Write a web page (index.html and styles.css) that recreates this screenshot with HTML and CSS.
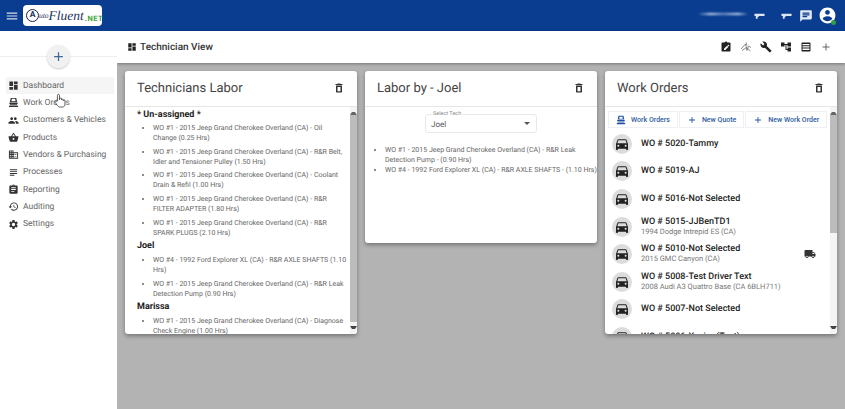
FILE: index.html
```html
<!DOCTYPE html>
<html lang="en">
<head>
    <meta charset="UTF-8">
    <meta name="viewport" content="width=device-width, initial-scale=1.0">
    <title>AutoFluent - Technician View</title>
    <link rel="stylesheet" href="styles.css">
</head>
<body>
    <svg class="icon-defs" aria-hidden="true">
        <symbol id="i-menu" viewBox="0 0 24 24"><path d="M3 18h18v-2H3v2zm0-5h18v-2H3v2zm0-7v2h18V6H3z"/></symbol>
        <symbol id="i-dashboard" viewBox="0 0 24 24"><path d="M3 13h8V3H3v10zm0 8h8v-6H3v6zm10 0h8V11h-8v10zm0-18v6h8V3h-8z"/></symbol>
        <symbol id="i-garage" viewBox="0 0 24 24"><path d="M6 2h12l2 9H4zm2.500 2-1 5h9l-1-5z" fill-rule="evenodd"/><path d="M3 12h18v3H3zM4 16h16v2H4zM2 19h20v3H2z"/></symbol>
        <symbol id="i-people" viewBox="0 0 24 24"><path d="M16 11c1.66 0 2.99-1.34 2.99-3S17.66 5 16 5c-1.66 0-3 1.34-3 3s1.34 3 3 3zm-8 0c1.66 0 2.99-1.34 2.99-3S9.66 5 8 5C6.34 5 5 6.34 5 8s1.34 3 3 3zm0 2c-2.33 0-7 1.17-7 3.5V19h14v-2.5c0-2.33-4.67-3.5-7-3.5zm8 0c-.29 0-.62.02-.97.05 1.16.84 1.97 1.97 1.97 3.45V19h6v-2.5c0-2.33-4.67-3.5-7-3.5z"/></symbol>
        <symbol id="i-basket" viewBox="0 0 24 24"><path d="M17.21 9l-4.38-6.56c-.19-.28-.51-.42-.83-.42-.32 0-.64.14-.83.43L6.79 9H2c-.55 0-1 .45-1 1 0 .09.01.18.04.27l2.54 9.27c.23.84 1 1.46 1.92 1.46h13c.92 0 1.69-.62 1.93-1.46l2.54-9.27L23 10c0-.55-.45-1-1-1h-4.79zM9 9l3-4.4L15 9H9zm3 8c-1.1 0-2-.9-2-2s.9-2 2-2 2 .9 2 2-.9 2-2 2z"/></symbol>
        <symbol id="i-business" viewBox="0 0 24 24"><path d="M12 7V3H2v18h20V7H12zM6 19H4v-2h2v2zm0-4H4v-2h2v2zm0-4H4V9h2v2zm0-4H4V5h2v2zm4 12H8v-2h2v2zm0-4H8v-2h2v2zm0-4H8V9h2v2zm0-4H8V5h2v2zm10 12h-8v-2h2v-2h-2v-2h2v-2h-2V9h8v10zm-2-8h-2v2h2v-2zm0 4h-2v2h2v-2z"/></symbol>
        <symbol id="i-subject" viewBox="0 0 24 24"><path d="M14 17H4v2h10v-2zm6-8H4v2h16V9zM4 15h16v-2H4v2zM4 5v2h16V5H4z"/></symbol>
        <symbol id="i-assignment" viewBox="0 0 24 24"><path d="M19 3h-4.18C14.4 1.84 13.3 1 12 1c-1.3 0-2.4.84-2.82 2H5c-1.1 0-2 .9-2 2v14c0 1.1.9 2 2 2h14c1.1 0 2-.9 2-2V5c0-1.1-.9-2-2-2zm-7 0c.55 0 1 .45 1 1s-.45 1-1 1-1-.45-1-1 .45-1 1-1zm2 14H7v-2h7v2zm3-4H7v-2h10v2zm0-4H7V7h10v2z"/></symbol>
        <symbol id="i-history" viewBox="0 0 24 24"><path d="M13 3c-4.97 0-9 4.03-9 9H1l3.89 3.89.07.14L9 12H6c0-3.87 3.13-7 7-7s7 3.13 7 7-3.13 7-7 7c-1.93 0-3.68-.79-4.94-2.06l-1.42 1.42C8.27 19.99 10.51 21 13 21c4.97 0 9-4.03 9-9s-4.03-9-9-9zm-1 5v5l4.28 2.54.72-1.21-3.5-2.08V8H12z"/></symbol>
        <symbol id="i-settings" viewBox="0 0 24 24"><path d="M19.14 12.94c.04-.3.06-.61.06-.94 0-.32-.02-.64-.07-.94l2.03-1.58c.18-.14.23-.41.12-.61l-1.92-3.32c-.12-.22-.37-.29-.59-.22l-2.39.96c-.5-.38-1.03-.7-1.62-.94l-.36-2.54c-.04-.24-.24-.41-.48-.41h-3.84c-.24 0-.43.17-.47.41l-.36 2.54c-.59.24-1.13.57-1.62.94l-2.39-.96c-.22-.08-.47 0-.59.22L2.74 8.87c-.12.21-.08.47.12.61l2.03 1.58c-.05.3-.09.63-.09.94s.02.64.07.94l-2.03 1.58c-.18.14-.23.41-.12.61l1.92 3.32c.12.22.37.29.59.22l2.39-.96c.5.38 1.03.7 1.62.94l.36 2.54c.05.24.24.41.48.41h3.84c.24 0 .44-.17.47-.41l.36-2.54c.59-.24 1.13-.56 1.62-.94l2.39.96c.22.08.47 0 .59-.22l1.92-3.32c.12-.22.07-.47-.12-.61l-2.01-1.58zM12 15.6c-1.98 0-3.6-1.62-3.6-3.6s1.62-3.6 3.6-3.6 3.6 1.62 3.6 3.6-1.62 3.6-3.6 3.6z"/></symbol>
        <symbol id="i-delete" viewBox="0 0 24 24"><path d="M6 19c0 1.1.9 2 2 2h8c1.1 0 2-.9 2-2V7H6v12zM9 10h6v8.500H9zM15.500 4l-1-1h-5l-1 1H5v2h14V4z" fill-rule="evenodd"/></symbol>
        <symbol id="i-car" viewBox="0 0 24 24"><path d="M18.92 6.01C18.72 5.42 18.16 5 17.5 5h-11c-.66 0-1.21.42-1.42 1.01L3 12v8c0 .55.45 1 1 1h1c.55 0 1-.45 1-1v-1h12v1c0 .55.45 1 1 1h1c.55 0 1-.45 1-1v-8l-2.08-5.99zM6.5 16c-.83 0-1.5-.67-1.5-1.5S5.67 13 6.5 13s1.5.67 1.5 1.5S7.33 16 6.5 16zm11 0c-.83 0-1.5-.67-1.5-1.5s.67-1.5 1.5-1.5 1.5.67 1.5 1.5-.67 1.5-1.5 1.5zM5 11l1.5-4.5h11L19 11H5z"/></symbol>
        <symbol id="i-truck" viewBox="0 0 24 24"><path d="M20 8h-3V4H3c-1.1 0-2 .9-2 2v11h2c0 1.66 1.34 3 3 3s3-1.34 3-3h6c0 1.66 1.34 3 3 3s3-1.34 3-3h2v-5l-3-4zM6 18.5c-.83 0-1.5-.67-1.5-1.5s.67-1.5 1.5-1.5 1.5.67 1.5 1.5-.67 1.5-1.5 1.5zm13.5-9l1.96 2.5H17V9.5h2.5zm-1.5 9c-.83 0-1.5-.67-1.5-1.5s.67-1.5 1.5-1.5 1.5.67 1.5 1.5-.67 1.5-1.5 1.5z"/></symbol>
        <symbol id="i-add" viewBox="0 0 24 24"><path d="M19 13h-6v6h-2v-6H5v-2h6V5h2v6h6v2z"/></symbol>
        <symbol id="i-wrench" viewBox="0 0 24 24"><path d="M22.7 19l-9.1-9.1c.9-2.3.4-5-1.5-6.9-2-2-5-2.4-7.4-1.3L9 6 6 9 1.6 4.7C.4 7.1.9 10.1 2.9 12.1c1.9 1.9 4.6 2.4 6.9 1.5l9.1 9.1c.4.4 1 .4 1.4 0l2.3-2.3c.5-.4.5-1.1.1-1.4z"/></symbol>
        <symbol id="i-tree" viewBox="0 0 24 24"><path d="M22 11V3h-7v3H9V3H2v8h7V8h2v10h4v3h7v-8h-7v3h-2V8h2v3z"/></symbol>
        <symbol id="i-table" viewBox="0 0 24 24"><path d="M5 3h14c1.100 0 2 .9 2 2v14c0 1.100-.9 2-2 2H5c-1.100 0-2-.9-2-2V5c0-1.100.9-2 2-2zm0 3v2.500h14V6zm0 4.500V13h14v-2.500zm0 4.500v3h14v-3z" fill-rule="evenodd"/></symbol>
        <symbol id="i-note" viewBox="0 0 24 24"><path d="M19 3h-4.180C14.400 1.840 13.300 1 12 1c-1.300 0-2.400.84-2.820 2H5c-1.100 0-2 .9-2 2v14c0 1.100.9 2 2 2h14c1.100 0 2-.9 2-2V5c0-1.100-.9-2-2-2zM8 18v-2.500l6-6 2.500 2.500-6 6zm9.300-6.800-2.500-2.500 1-1c.3-.3.700-.3 1 0l1.500 1.500c.3.3.3.700 0 1z" fill-rule="evenodd"/></symbol>
        <symbol id="i-scatter" viewBox="0 0 24 24"><path d="M2 16 11 6l3 13 3-9 5 3M4 19l9-6 8 7M12 3l2 6" fill="none" stroke="currentColor" stroke-width="1.500"/></symbol>
        <symbol id="i-flag" viewBox="0 0 24 24"><path d="M1 8h22v5H10v2H8v4H4v-6H1z"/></symbol>
        <symbol id="i-chat" viewBox="0 0 24 24"><path d="M20 2H4c-1.100 0-1.990.9-1.990 2L2 22l4-4h14c1.100 0 2-.9 2-2V4c0-1.100-.9-2-2-2zM6 6h12v2H6zm0 3h12v2H6zm0 3h8v2H6z" fill-rule="evenodd"/></symbol>
        <symbol id="i-account" viewBox="0 0 24 24"><path d="M12 2C6.480 2 2 6.480 2 12s4.480 10 10 10 10-4.480 10-10S17.520 2 12 2zm0 3c1.660 0 3 1.340 3 3s-1.340 3-3 3-3-1.340-3-3 1.340-3 3-3zm0 14.200c-2.500 0-4.710-1.280-6-3.220.03-1.990 4-3.080 6-3.080 1.990 0 5.970 1.090 6 3.080-1.290 1.940-3.500 3.220-6 3.220z"/></symbol>
    </svg>

    <header class="topbar">
        <svg class="icon menu-icon"><use href="#i-menu"/></svg>
        <div class="logo">
            <span class="logo-mark">A</span><span class="logo-uto">uto</span><span class="logo-fluent">Fluent</span><span class="logo-net">.NET</span>
        </div>
        <div class="topbar-right">
            <div class="smudge"></div>
            <svg class="icon flag-icon"><use href="#i-flag"/></svg>
            <svg class="icon flag-icon flag-second"><use href="#i-flag"/></svg>
            <svg class="icon chat-icon"><use href="#i-chat"/></svg>
            <div class="avatar">
                <svg class="icon avatar-icon"><use href="#i-account"/></svg>
                <span class="online-dot"></span>
            </div>
        </div>
    </header>

    <div class="layout">
        <aside class="sidebar">
            <div class="add-row">
                <button class="add-btn"><svg class="icon"><use href="#i-add"/></svg></button>
            </div>
            <nav class="nav">
                <a class="nav-item active"><svg class="icon"><use href="#i-dashboard"/></svg>Dashboard</a>
                <a class="nav-item"><svg class="icon"><use href="#i-garage"/></svg>Work Orders</a>
                <a class="nav-item"><svg class="icon"><use href="#i-people"/></svg>Customers &amp; Vehicles</a>
                <a class="nav-item"><svg class="icon"><use href="#i-basket"/></svg>Products</a>
                <a class="nav-item"><svg class="icon"><use href="#i-business"/></svg>Vendors &amp; Purchasing</a>
                <a class="nav-item"><svg class="icon"><use href="#i-subject"/></svg>Processes</a>
                <a class="nav-item"><svg class="icon"><use href="#i-assignment"/></svg>Reporting</a>
                <a class="nav-item"><svg class="icon"><use href="#i-history"/></svg>Auditing</a>
                <a class="nav-item"><svg class="icon"><use href="#i-settings"/></svg>Settings</a>
            </nav>
            <svg class="hand-cursor" viewBox="0 0 14 18">
                <path d="M4 9V2.500a1.200 1.200 0 0 1 2.400 0V7.500l.3-1.300a1.100 1.100 0 0 1 2.100.3v1.200a1 1 0 0 1 2 .1v.8a1 1 0 0 1 2 .2v3.700c0 2-1 3.500-2.500 3.500H6.500c-1 0-1.700-.6-2.300-1.500L1.300 10.500c-.6-1 .6-2 1.500-1.100z" fill="#fff" stroke="#333" stroke-width=".9"/>
            </svg>
        </aside>

        <main class="main">
            <div class="toolbar">
                <svg class="icon view-icon"><use href="#i-dashboard"/></svg>
                <span class="view-title">Technician View</span>
                <div class="toolbar-actions">
                    <svg class="icon"><use href="#i-note"/></svg>
                    <svg class="icon thin"><use href="#i-scatter"/></svg>
                    <svg class="icon"><use href="#i-wrench"/></svg>
                    <svg class="icon"><use href="#i-tree"/></svg>
                    <svg class="icon"><use href="#i-table"/></svg>
                    <svg class="icon thin"><use href="#i-add"/></svg>
                </div>
            </div>

            <div class="cards">
                <section class="card">
                    <div class="card-head">
                        <h2>Technicians Labor</h2>
                        <svg class="icon"><use href="#i-delete"/></svg>
                    </div>
                    <div class="card-scroll">
                        <div class="card-body labor">
                            <h4>* Un-assigned *</h4>
                            <ul>
                                <li>WO #1 - 2015 Jeep Grand Cherokee Overland (CA) - Oil Change (0.25 Hrs)</li>
                                <li>WO #1 - 2015 Jeep Grand Cherokee Overland (CA) - R&amp;R Belt, Idler and Tensioner Pulley (1.50 Hrs)</li>
                                <li>WO #1 - 2015 Jeep Grand Cherokee Overland (CA) - Coolant Drain &amp; Refil (1.00 Hrs)</li>
                                <li>WO #1 - 2015 Jeep Grand Cherokee Overland (CA) - R&amp;R FILTER ADAPTER (1.80 Hrs)</li>
                                <li>WO #1 - 2015 Jeep Grand Cherokee Overland (CA) - R&amp;R SPARK PLUGS (2.10 Hrs)</li>
                            </ul>
                            <h4>Joel</h4>
                            <ul>
                                <li>WO #4 - 1992 Ford Explorer XL (CA) - R&amp;R AXLE SHAFTS (1.10 Hrs)</li>
                                <li>WO #1 - 2015 Jeep Grand Cherokee Overland (CA) - R&amp;R Leak Detection Pump (0.90 Hrs)</li>
                            </ul>
                            <h4>Marissa</h4>
                            <ul>
                                <li>WO #1 - 2015 Jeep Grand Cherokee Overland (CA) - Diagnose Check Engine (1.00 Hrs)</li>
                            </ul>
                        </div>
                        <div class="scrollbar">
                            <span class="arrow up"></span>
                            <span class="thumb thumb-long"></span>
                            <span class="arrow down"></span>
                        </div>
                    </div>
                </section>

                <section class="card card-short">
                    <div class="card-head">
                        <h2>Labor by - Joel</h2>
                        <svg class="icon"><use href="#i-delete"/></svg>
                    </div>
                    <div class="card-body tech">
                        <fieldset class="select">
                            <legend>Select Tech</legend>
                            <span>Joel</span>
                            <i class="caret"></i>
                        </fieldset>
                        <ul>
                            <li>WO #1 - 2015 Jeep Grand Cherokee Overland (CA) - R&amp;R Leak Detection Pump - (0.90 Hrs)</li>
                            <li>WO #4 - 1992 Ford Explorer XL (CA) - R&amp;R AXLE SHAFTS - (1.10 Hrs)</li>
                        </ul>
                    </div>
                </section>

                <section class="card">
                    <div class="card-head">
                        <h2>Work Orders</h2>
                        <svg class="icon"><use href="#i-delete"/></svg>
                    </div>
                    <div class="card-scroll">
                        <div class="card-body orders">
                            <div class="order-btns">
                                <button class="order-btn"><svg class="icon"><use href="#i-garage"/></svg>Work Orders</button>
                                <button class="order-btn"><svg class="icon"><use href="#i-add"/></svg>New Quote</button>
                                <button class="order-btn"><svg class="icon"><use href="#i-add"/></svg>New Work Order</button>
                            </div>
                            <div class="order">
                                <span class="car"><svg class="icon"><use href="#i-car"/></svg></span>
                                <div class="order-text"><b>WO # 5020-Tammy</b></div>
                            </div>
                            <div class="order">
                                <span class="car"><svg class="icon"><use href="#i-car"/></svg></span>
                                <div class="order-text"><b>WO # 5019-AJ</b></div>
                            </div>
                            <div class="order">
                                <span class="car"><svg class="icon"><use href="#i-car"/></svg></span>
                                <div class="order-text"><b>WO # 5016-Not Selected</b></div>
                            </div>
                            <div class="order">
                                <span class="car"><svg class="icon"><use href="#i-car"/></svg></span>
                                <div class="order-text"><b>WO # 5015-JJBenTD1</b><small>1994 Dodge Intrepid ES (CA)</small></div>
                            </div>
                            <div class="order">
                                <span class="car"><svg class="icon"><use href="#i-car"/></svg></span>
                                <div class="order-text"><b>WO # 5010-Not Selected</b><small>2015 GMC Canyon (CA)</small></div>
                                <svg class="icon truck"><use href="#i-truck"/></svg>
                            </div>
                            <div class="order">
                                <span class="car"><svg class="icon"><use href="#i-car"/></svg></span>
                                <div class="order-text"><b>WO # 5008-Test Driver Text</b><small>2008 Audi A3 Quattro Base (CA 6BLH711)</small></div>
                            </div>
                            <div class="order">
                                <span class="car"><svg class="icon"><use href="#i-car"/></svg></span>
                                <div class="order-text"><b>WO # 5007-Not Selected</b></div>
                            </div>
                            <div class="order">
                                <span class="car"><svg class="icon"><use href="#i-car"/></svg></span>
                                <div class="order-text"><b>WO # 5006-Xavier (Test)</b></div>
                            </div>
                        </div>
                        <div class="scrollbar">
                            <span class="arrow up"></span>
                            <span class="thumb thumb-short"></span>
                            <span class="arrow down"></span>
                        </div>
                    </div>
                </section>
            </div>
        </main>
    </div>
</body>
</html>
```

FILE: styles.css
```css
* {
    box-sizing: border-box;
}
body {
    margin: 0;
    width: 845px;
    height: 409px;
    overflow: hidden;
    font-family: Roboto, "Liberation Sans", sans-serif;
    text-rendering: geometricPrecision;
    color: #555;
    background: #fff;
}
.icon-defs {
    display: none;
}
.icon {
    display: block;
    flex: none;
    width: 12px;
    height: 12px;
    fill: currentColor;
}

/* top bar */
.topbar {
    display: flex;
    align-items: center;
    height: 31px;
    padding-left: 5px;
    background: #0a3d8f;
    color: #fff;
}
.menu-icon {
    width: 14px;
    height: 14px;
    color: #d5deee;
}
.logo {
    display: flex;
    align-items: center;
    width: 79px;
    height: 21px;
    margin-left: 4px;
    padding-left: 3px;
    background: #fff;
    border-radius: 4px;
    color: #1c2f5c;
}
.logo-mark {
    flex: none;
    width: 13px;
    height: 13px;
    border: 1.5px solid #1c2250;
    border-radius: 50%;
    font-size: 8.500px;
    font-weight: 700;
    line-height: 10px;
    text-align: center;
}
.logo-uto {
    font-family: "Liberation Serif", serif;
    font-style: italic;
    font-size: 7.500px;
}
.logo-fluent {
    font-family: "Liberation Serif", serif;
    font-style: italic;
    font-size: 13.500px;
}
.logo-net {
    margin: 5px 0 0 1px;
    font-size: 7.500px;
    font-weight: 700;
    letter-spacing: .5px;
    color: #3fa43a;
}
.topbar-right {
    display: flex;
    align-items: center;
    margin-left: auto;
    padding-right: 8px;
}
.smudge {
    width: 50px;
    height: 2px;
    margin: -4px 6px 0 0;
    background: linear-gradient(90deg, transparent, #cfdcf2 25%, #6f8fc6 50%, #cfdcf2 80%, transparent);
    filter: blur(1px);
}
.flag-icon {
    width: 11px;
    height: 11px;
    color: #dfe6f3;
}
.flag-second {
    margin-left: 16px;
}
.chat-icon {
    width: 14px;
    height: 14px;
    margin-left: 7px;
    color: #e4eaf5;
}
.avatar {
    position: relative;
    margin-left: 5px;
}
.avatar-icon {
    width: 19px;
    height: 19px;
}
.online-dot {
    position: absolute;
    right: 1px;
    bottom: 0;
    width: 5px;
    height: 5px;
    border-radius: 50%;
    background: #2f9e44;
}

/* sidebar */
.layout {
    display: flex;
    height: 378px;
}
.sidebar {
    position: relative;
    flex: none;
    width: 117px;
    background: #fff;
}
.add-row {
    display: flex;
    justify-content: center;
    height: 46px;
    padding-top: 14px;
    background: linear-gradient(#fff 25px, #eee 25px, #eee 26px, #fff 26px);
}
.add-btn {
    display: flex;
    align-items: center;
    justify-content: center;
    width: 23px;
    height: 23px;
    padding: 0;
    border: none;
    border-radius: 50%;
    background: #f1f1f1;
    box-shadow: 0 1px 2px rgba(0, 0, 0, .2);
    color: #3f6797;
}
.add-btn .icon {
    width: 15px;
    height: 15px;
}
.nav {
    padding: 0 3px 0 6px;
}
.nav-item {
    display: flex;
    align-items: center;
    gap: 4px;
    height: 17.33px;
    padding-left: 2px;
    font-size: 8.500px;
    color: #666;
    white-space: nowrap;
}
.nav-item .icon {
    width: 11px;
    height: 11px;
    color: #333;
}
.nav-item.active {
    background: #f5f5f5;
}
.hand-cursor {
    position: absolute;
    top: 62px;
    left: 54px;
    width: 12px;
    height: 16px;
}

/* main area */
.main {
    flex: 1;
    background: #b3b3b3;
}
.toolbar {
    display: flex;
    align-items: center;
    height: 32px;
    padding: 0 13px 0 10px;
    background: #fff;
    box-shadow: 0 1px 3px rgba(0, 0, 0, .35);
}
.view-icon {
    width: 10px;
    height: 10px;
    color: #222;
}
.view-title {
    margin-left: 3px;
    font-size: 10px;
    font-weight: 500;
    color: #333;
}
.toolbar-actions {
    display: flex;
    align-items: center;
    gap: 8px;
    margin-left: auto;
    color: #222;
}
.toolbar-actions .thin {
    color: #666;
}

/* cards */
.cards {
    display: flex;
    align-items: flex-start;
    gap: 8px;
    padding: 8px;
}
.card {
    display: flex;
    flex-direction: column;
    width: 232px;
    height: 263px;
    background: #fff;
    border-radius: 3px;
    box-shadow: 0 2px 4px rgba(0, 0, 0, .35);
    overflow: hidden;
}
.card-short {
    height: 172px;
}
.card-head {
    display: flex;
    flex: none;
    align-items: center;
    justify-content: space-between;
    height: 36px;
    padding: 0 12px;
    border-bottom: 1px solid #e6e6e6;
    color: #333;
}
.card-head h2 {
    margin: 0;
    font-size: 13px;
    font-weight: 400;
    color: #444;
}
.card-head .icon {
    margin-top: -2px;
}
.card-scroll {
    display: flex;
    flex: 1;
    min-height: 0;
}
.card-body {
    flex: 1;
    min-width: 0;
    overflow: hidden;
}
.card ul {
    margin: 0;
    padding: 0;
    list-style: disc;
    font-size: 7px;
    line-height: 10px;
    color: #666;
}
.labor {
    padding: 2.500px 0 0 12px;
}
.labor h4 {
    margin: 0;
    font-size: 9px;
    line-height: 11px;
    font-weight: 700;
    color: #222;
}
.labor ul {
    padding: 2.500px 3px 0 16px;
}
.labor li {
    margin-bottom: 3.700px;
}
.tech {
    padding-top: 5px;
}
.card .tech ul {
    margin-top: 12px;
    padding-left: 20px;
}
.select {
    position: relative;
    display: flex;
    align-items: center;
    width: 112px;
    height: 21px;
    margin: 0 0 0 60px;
    padding: 0 5px;
    border: 1px solid #e8e8e8;
    border-radius: 3px;
    font-size: 8px;
    color: #555;
}
.select legend {
    margin-left: 1px;
    padding: 0 1px;
    font-size: 5.500px;
    line-height: 5px;
    color: #888;
}
.caret {
    position: absolute;
    top: 5px;
    right: 6px;
    border: 3px solid transparent;
    border-top-color: #555;
}

/* scrollbar next to the lists */
.scrollbar {
    display: flex;
    flex: none;
    flex-direction: column;
    justify-content: flex-start;
    width: 7px;
    height: 100%;
    background: #f4f4f4;
}
.arrow {
    flex: none;
    height: 8px;
    border: 2px solid transparent;
}
.arrow.up {
    border-bottom: 3px solid #666;
}
.arrow.down {
    margin-top: auto;
    border-top: 3px solid #444;
}
.thumb {
    display: block;
    background: #bcbcbc;
}
.thumb-long {
    height: 207px;
}
.thumb-short {
    height: 118px;
}

/* work orders */
.orders {
    padding: 4px 3px 0 3px;
}
.order-btns {
    display: flex;
    gap: 1px;
    margin-bottom: 2px;
}
.order-btn {
    display: flex;
    flex: none;
    align-items: center;
    justify-content: center;
    gap: 5px;
    height: 17px;
    padding: 0 7px;
    border: 1px solid #eef0f3;
    background: #fff;
    font-family: inherit;
    font-size: 7px;
    font-weight: 500;
    color: #2e5d9e;
    white-space: nowrap;
}
.order-btn .icon {
    width: 10px;
    height: 10px;
    color: #1e4fa3;
}
.order {
    display: flex;
    align-items: center;
    height: 27.600px;
    padding-left: 4px;
}
.car {
    display: flex;
    flex: none;
    align-items: center;
    justify-content: center;
    width: 20px;
    height: 20px;
    border-radius: 50%;
    background: #dcdcdc;
    color: #222;
}
.car .icon {
    width: 16px;
    height: 16px;
}
.order-text {
    margin-left: 9px;
    line-height: 10px;
}
.order-text b {
    display: block;
    font-size: 9px;
    font-weight: 500;
    color: #222;
}
.order-text small {
    display: block;
    font-size: 7.500px;
    color: #777;
}
.truck {
    margin: 0 11px 0 auto;
    color: #333;
}
```
